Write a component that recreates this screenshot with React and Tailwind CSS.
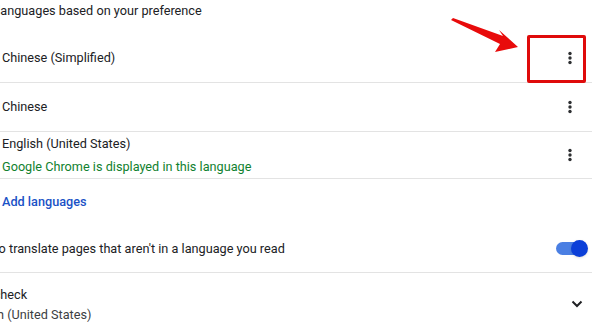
import React from 'react';

const font = { fontFamily: 'Roboto, "Liberation Sans", Arial, sans-serif' };

function Dots() {
  return (
    <svg width="6" height="14" viewBox="0 0 6 14" className="text-[#2d2f31]">
      <circle cx="3" cy="2.5" r="1.7" fill="currentColor" />
      <circle cx="3" cy="7" r="1.7" fill="currentColor" />
      <circle cx="3" cy="11.5" r="1.7" fill="currentColor" />
    </svg>
  );
}

function LangRow({ name, note, tall }) {
  return (
    <div
      className={`flex items-center justify-between border-b border-[#e3e3e3] pl-[2px] pr-[19px] ${
        tall ? 'h-[47px]' : 'h-[49px]'
      }`}
    >
      <div className="flex flex-col gap-[3px]">
        <span className="leading-5 text-[#202124]">{name}</span>
        {note && <span className="leading-5 text-[#11812f]">{note}</span>}
      </div>
      <Dots />
    </div>
  );
}

export default function App() {
  return (
    <div className="relative w-[594px] h-[336px] overflow-hidden bg-white text-[12.7px]" style={font}>
      <div className="-ml-[37px] w-[629px]">
        <div className="h-[34px] pt-[1px] leading-5 text-[#202124]">Order languages based on your preference</div>

        <div className="ml-[37px]">
          <LangRow name="Chinese (Simplified)" />
          <LangRow name="Chinese" />
          <LangRow name="English (United States)" note="Google Chrome is displayed in this language" tall />
          <div className="flex h-[46px] items-center pl-[2px]">
            <span className="font-medium text-[#1a52c6]">Add languages</span>
          </div>
        </div>

        <div className="flex h-[48px] items-center justify-between border-b border-[#e3e3e3] pr-[4px]">
          <span className="text-[#202124]">Offer to translate pages that aren't in a language you read</span>
          <div className="relative flex h-[18px] w-[32px] items-center">
            <div className="h-[13px] w-[28px] rounded-full bg-[#4a7fe3]" />
            <div className="absolute right-0 h-[17px] w-[17px] rounded-full bg-[#0b3fd8] shadow-sm" />
          </div>
        </div>

        <div className="flex h-[62px] items-center justify-between pr-[9px]">
          <div className="flex flex-col pt-[1px]">
            <span className="leading-5 text-[#202124]">Spell check</span>
            <span className="leading-5 text-[#3c4043]">English (United States)</span>
          </div>
          <svg width="12" height="8" viewBox="0 0 12 8">
            <polyline points="1.5,1.5 6,6 10.5,1.5" fill="none" stroke="#202124" strokeWidth="2" />
          </svg>
        </div>
      </div>

      <div className="absolute left-[527px] top-[35px] h-[48px] w-[59px] rounded-[2px] border-[3px] border-[#df0b0b]" />
      <svg className="absolute left-[448px] top-[16px]" width="76" height="40" viewBox="0 0 76 40">
        <polygon points="3,4 5,2 55,20 51,14 70,31 47,36 52,28" fill="#e80b0b" />
      </svg>
    </div>
  );
}
